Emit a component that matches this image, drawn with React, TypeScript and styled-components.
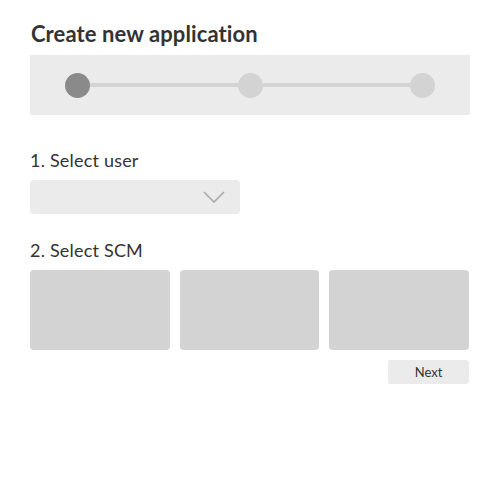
import React from "react";
import styled, { createGlobalStyle } from "styled-components";

const Global = createGlobalStyle`
  html, body { margin: 0; padding: 0; background: #fff; }
  body { font-family: Lato, "Open Sans", sans-serif; color: #333; }
`;

const Page = styled.div`
  width: 440px;
  padding: 20px 30px;
  display: flex;
  flex-direction: column;
`;

const Title = styled.h1`
  margin: 0 0 0 1px;
  font-size: 22px;
  font-weight: 700;
  line-height: 28px;
  color: #333;
  letter-spacing: 0.1px;
`;

const Band = styled.div`
  margin-top: 7px;
  height: 60px;
  background: #ebebeb;
  display: flex;
  align-items: center;
  padding: 0 35px;
`;

const Track = styled.div`
  flex: 1;
  display: flex;
  align-items: center;
`;

const Dot = styled.div<{ $active?: boolean }>`
  width: 25px;
  height: 25px;
  border-radius: 50%;
  flex: none;
  background: ${(p) => (p.$active ? "#8a8a8a" : "#d3d3d3")};
`;

const Line = styled.div`
  flex: 1;
  height: 4px;
  background: #d3d3d3;
`;

const Label = styled.div<{ $top: number }>`
  font-size: 18px;
  line-height: 22px;
  letter-spacing: 0.2px;
  color: #333;
  margin-top: ${(p) => p.$top}px;
`;

const Select = styled.div`
  margin-top: 9px;
  width: 210px;
  height: 34px;
  border-radius: 4px;
  background: #ebebeb;
  display: flex;
  align-items: center;
  justify-content: flex-end;
  padding-right: 15px;
  box-sizing: border-box;
`;

const Cards = styled.div`
  margin-top: 9px;
  width: 439px;
  display: grid;
  grid-template-columns: repeat(3, 1fr);
  column-gap: 10px;
`;

const Card = styled.div`
  height: 80px;
  border-radius: 4px;
  background: #d3d3d3;
`;

const Footer = styled.div`
  margin-top: 10px;
  display: flex;
  justify-content: flex-end;
  padding-right: 1px;
`;

const Button = styled.button`
  width: 81px;
  height: 24px;
  border: none;
  border-radius: 3px;
  background: #ebebeb;
  font-family: Lato, sans-serif;
  font-size: 13px;
  color: #333;
  padding: 0;
`;

export default function App() {
  return (
    <>
      <Global />
      <Page>
        <Title>Create new application</Title>
        <Band>
          <Track>
            <Dot $active />
            <Line />
            <Dot />
            <Line />
            <Dot />
          </Track>
        </Band>
        <Label $top={34}>1. Select user</Label>
        <Select>
          <svg width="22" height="12" viewBox="0 0 22 12">
            <polyline points="1,1 11,11 21,1" fill="none" stroke="#aaa" strokeWidth="1.6" />
          </svg>
        </Select>
        <Label $top={25}>2. Select SCM</Label>
        <Cards>
          <Card />
          <Card />
          <Card />
        </Cards>
        <Footer>
          <Button>Next</Button>
        </Footer>
      </Page>
    </>
  );
}
